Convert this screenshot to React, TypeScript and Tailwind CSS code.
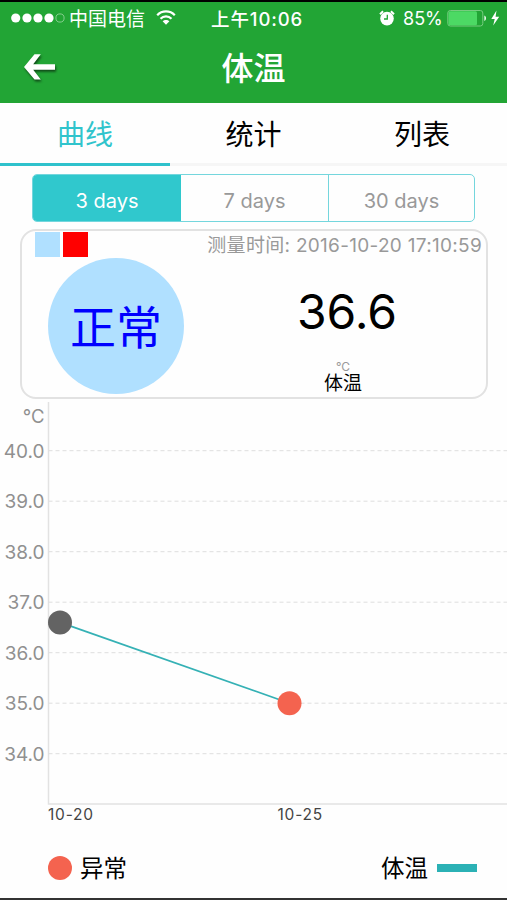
import clsx from "clsx";

const TABS = ["曲线", "统计", "列表"];
const RANGES = ["3 days", "7 days", "30 days"];
const TICKS = ["40.0", "39.0", "38.0", "37.0", "36.0", "35.0", "34.0"];

// chart geometry, relative to the top of the chart block
const AXIS_X = 48.5;
const FIRST_TICK_Y = 51.7;
const TICK_STEP = 50.5;
const BASE_Y = 405;

function tempToY(value: number) {
  return FIRST_TICK_Y + (40 - value) * TICK_STEP;
}

const POINTS = [
  { x: 60, value: 36.6, label: "10-20", color: "#636363" },
  { x: 289.5, value: 35, label: "10-25", color: "#f4634f" },
];

function StatusBar() {
  return (
    <div className="flex h-8 items-center pr-[7px] pl-[11px] text-white">
      <svg width="54" height="12" viewBox="0 0 54 12" fill="#fff">
        <circle cx="4.7" cy="6" r="4.6" />
        <circle cx="16" cy="6" r="4.6" />
        <circle cx="27" cy="6" r="4.6" />
        <circle cx="38" cy="6" r="4.6" />
        <circle cx="49" cy="6" r="4.1" fill="none" stroke="#8fd296" strokeWidth="0.9" />
      </svg>
      <span className="mt-[3px] ml-[4px] w-[78px] text-[19px] leading-8 whitespace-nowrap">中国电信</span>
      <svg className="-mt-[2px] ml-[9px]" width="20" height="15" viewBox="0 0 20 15" fill="none" stroke="#fff" strokeWidth="2.2">
        <path d="M1.2 5.2C6 0.1 14 0.1 18.8 5.2" />
        <path d="M4.5 8.7C7.6 5.5 12.4 5.5 15.5 8.7" />
        <path d="M10 14.8L6.6 11.3C8.5 9.5 11.5 9.5 13.4 11.3Z" fill="#fff" stroke="none" />
      </svg>
      <span className="mt-px ml-[35px] w-[93px] text-[18.5px] leading-8 font-medium tracking-[0.9px] whitespace-nowrap">
        上午10:06
      </span>
      <svg className="-mt-px ml-auto" width="16" height="16" viewBox="0 0 16 16">
        <circle cx="8" cy="8.6" r="6.8" fill="#fff" />
        <path d="M1 4.2L4.1 1.3M15 4.2L11.9 1.3" stroke="#fff" strokeWidth="2" />
        <path d="M8.3 4.8V9H5" fill="none" stroke="#22a535" strokeWidth="1.3" />
      </svg>
      <span className="mt-px ml-[8px] w-[41px] text-[18px] leading-8 whitespace-nowrap">85%</span>
      <svg className="ml-[3px]" width="53" height="18" viewBox="0 0 53 18">
        <rect x="0.8" y="1.5" width="35" height="15.5" rx="2.5" fill="none" stroke="#77cc80" strokeWidth="1" />
        <rect x="1.5" y="2.2" width="28.5" height="14" rx="1.5" fill="#4cd964" />
        <path d="M37.3 6.5C39.6 7.2 39.6 11.2 37.3 12Z" fill="#e6f7e8" />
        <path d="M49.5 1.5L44.3 9.9H47.7L46.2 16.5L52.2 7.7H48.6Z" fill="#fff" />
      </svg>
    </div>
  );
}

function Header() {
  return (
    <header className="h-[103px] border-t-2 border-black bg-[#22a535]">
      <StatusBar />
      <div className="grid h-[66px] grid-cols-3 items-center text-white">
        <svg className="ml-[22px] drop-shadow-[1px_2px_1px_rgba(0,0,0,0.55)]" width="36" height="30" viewBox="0 0 36 30">
          <path d="M2 15L12.5 2.3H18.8L11.2 12.3H33V17.7H11.2L18.8 27.6H12.5Z" fill="#fff" />
        </svg>
        <h1 className="pt-[3px] text-center text-[32px] leading-[63px] font-medium">体温</h1>
      </div>
    </header>
  );
}

function Tabs() {
  return (
    <nav className="grid h-[63px] grid-cols-[170px_167px_170px]">
      {TABS.map((tab, i) => (
        <button
          key={tab}
          className={clsx(
            "border-b-[3px] pt-[5px] text-[28px] leading-[55px]",
            i === 0 ? "border-[#2fc2cc] text-[#30c4cc]" : "border-[#f6f6f6] text-black",
          )}
        >
          {tab}
        </button>
      ))}
    </nav>
  );
}

function RangePicker() {
  return (
    <div className="mx-8 mt-2 grid h-12 grid-cols-[148px_147px_1fr] overflow-hidden rounded-[5px] border border-[#74d6dd]">
      {RANGES.map((range, i) => (
        <button
          key={range}
          className={clsx(
            "pt-[6px] text-[20px]",
            i === 0 ? "bg-[#30c8cd] text-white" : "text-[#999]",
            i === 2 && "border-l border-[#74d6dd]",
          )}
        >
          {range}
        </button>
      ))}
    </div>
  );
}

function ReadingCard() {
  return (
    <section className="mr-[19px] ml-5 mt-[7px] flex h-[170px] justify-between rounded-[16px] border-2 border-[#e2e2e2] pr-[4px] pl-[13px]">
      <div className="pt-px">
        <div className="flex gap-[3px]">
          <span className="h-[25px] w-[25px] bg-[#b0e0ff]" />
          <span className="h-[25px] w-[25px] bg-[#ff0000]" />
        </div>
        <div className="mt-px ml-[13px] flex h-[136px] w-[136px] items-center justify-center rounded-full bg-[#b0e0ff] pt-[2px] text-[46px] text-[#0000ff]">
          正常
        </div>
      </div>
      <div className="flex flex-col items-end">
        <p className="text-[19px] leading-[30px] tracking-[0.3px] whitespace-nowrap text-[#999]">
          测量时间: 2016-10-20 17:10:59
        </p>
        <div className="mr-[-4px] flex w-[278px] flex-col items-center text-black">
          <span className="mt-[21px] text-[48px] leading-[60px]">36.6</span>
          <span className="mt-[18px] -ml-[8px] text-[12px] leading-[14px] text-[#999]">°C</span>
          <span className="-ml-[8px] text-[19px] leading-[20px]">体温</span>
        </div>
      </div>
    </section>
  );
}

function TemperatureChart() {
  const line = POINTS.map((p) => `${p.x},${tempToY(p.value)}`).join(" ");

  return (
    <svg className="block" width="507" height="430" viewBox="0 0 507 430">
      <path d={`M${AXIS_X} 3V${BASE_Y}H507`} fill="none" stroke="#e2e2e2" strokeWidth="1.5" />
      <text x="44.5" y="24" textAnchor="end" fontSize="18.5" fill="#909090">
        °C
      </text>
      {TICKS.map((tick) => {
        const y = tempToY(Number(tick));
        return (
          <g key={tick}>
            <line x1={AXIS_X} x2="507" y1={y} y2={y} stroke="#dedede" strokeDasharray="4 3" />
            <text x="44.5" y={y + 7} textAnchor="end" fontSize="19" fill="#909090">
              {tick}
            </text>
          </g>
        );
      })}
      <polyline points={line} fill="none" stroke="#35b1b5" strokeWidth="1.7" />
      {POINTS.map((p) => (
        <g key={p.label}>
          <circle cx={p.x} cy={tempToY(p.value)} r="12" fill={p.color} />
          <text x={p.x - 12} y="420.5" fontSize="15.5" letterSpacing="0.8" fill="#444">
            {p.label}
          </text>
        </g>
      ))}
    </svg>
  );
}

function Legend() {
  return (
    <footer className="flex h-[71px] items-center justify-between border-b-2 border-[#333] pt-[8px] pr-[30px] pl-12 text-[23.5px] text-black">
      <div className="flex items-center gap-2">
        <span className="h-6 w-6 rounded-full bg-[#f4634f]" />
        <span className="pt-[2px]">异常</span>
      </div>
      <div className="flex items-center gap-[9px]">
        <span className="pt-[2px]">体温</span>
        <span className="h-2 w-10 bg-[#2bb1b5]" />
      </div>
    </footer>
  );
}

export default function App() {
  return (
    <main className="h-[900px] w-[507px] overflow-hidden bg-[#fefefe] font-['Inter','Noto_Sans_CJK_SC',sans-serif]">
      <Header />
      <Tabs />
      <RangePicker />
      <ReadingCard />
      <TemperatureChart />
      <Legend />
    </main>
  );
}
